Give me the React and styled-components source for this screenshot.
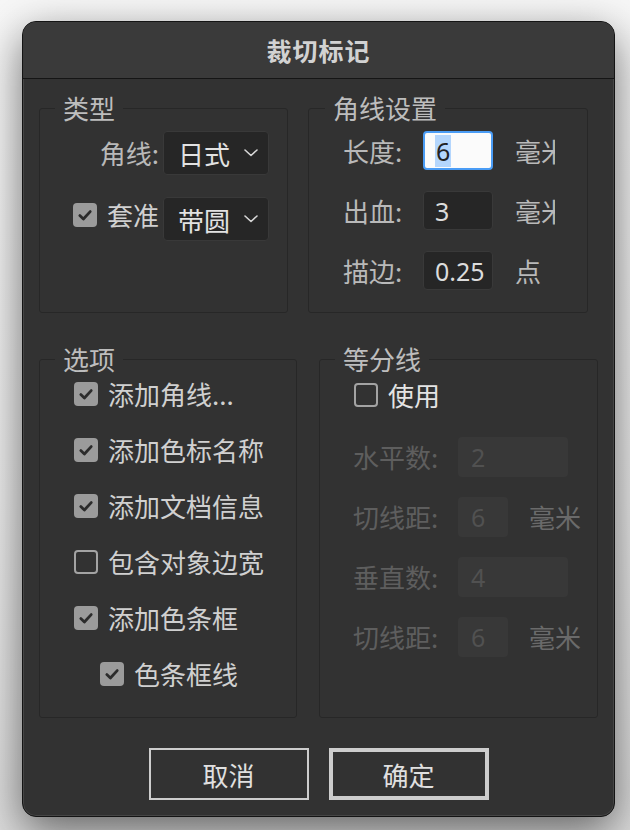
import React from "react";
import styled, { createGlobalStyle, css } from "styled-components";

const GlobalStyle = createGlobalStyle`
  html, body { margin: 0; padding: 0; }
  body {
    width: 630px;
    height: 830px;
    overflow: hidden;
    background: linear-gradient(180deg, #f7f7f7 0%, #ececec 60%, #dcdcdc 100%);
    font-family: "Noto Sans CJK SC", "Noto Sans", sans-serif;
  }
  #root { padding-top: 21px; }
`;

const Window = styled.div`
  box-sizing: border-box;
  margin-left: 22px;
  width: 593px;
  height: 796px;
  border: 1px solid #141414;
  border-radius: 14px;
  background: #323232;
  box-shadow: inset 0 0 0 1px rgba(255, 255, 255, 0.1),
    0 14px 44px rgba(0, 0, 0, 0.55);
  display: flex;
  flex-direction: column;
  overflow: hidden;
`;

const TitleBar = styled.div`
  box-sizing: border-box;
  height: 57px;
  flex: none;
  background: #3a3a3a;
  border-bottom: 1px solid #151515;
  display: flex;
  align-items: center;
  justify-content: center;
  color: #d2d2d2;
  font-size: 25px;
  font-weight: 700;
  letter-spacing: 1px;
`;

const Body = styled.div`
  flex: 1;
  display: flex;
  flex-direction: column;
  padding: 16px 16px 0 16px;
`;

const Row = styled.div`
  display: flex;
  gap: ${(p) => p.$gap}px;
  height: ${(p) => p.$h}px;
  margin-bottom: ${(p) => p.$mb}px;
`;

const Group = styled.fieldset`
  box-sizing: border-box;
  margin: 0;
  padding: 0;
  min-width: 0;
  width: ${(p) => p.$w}px;
  height: 100%;
  border: 1px solid #272727;
  border-radius: 3px;
`;

const Legend = styled.legend`
  margin-left: ${(p) => p.$ml || 15}px;
  padding: 0 8px;
  font-size: 26px;
  line-height: 26px;
  color: #bdbdbd;
`;

const TypeGrid = styled.div`
  display: grid;
  grid-template-columns: 119px 106px;
  column-gap: 4px;
  row-gap: 22px;
  padding-top: 10px;
`;

const FieldLabel = styled.div`
  font-size: 26px;
  line-height: 26px;
  color: ${(p) => (p.$disabled ? "#5e5e5e" : "#b9b9b9")};
  white-space: nowrap;
  display: flex;
  align-items: center;
  justify-content: ${(p) => (p.$right ? "flex-end" : "flex-start")};
  gap: 10px;
  ${(p) =>
    p.$raised &&
    css`
      align-self: start;
      margin-top: 6px;
      height: 24px;
    `}
`;

const LabelText = styled.span`
  color: ${(p) => p.$color || "inherit"};
`;

const Select = styled.div`
  box-sizing: border-box;
  height: 44px;
  background: #262626;
  border: 1px solid #393939;
  border-radius: 4px;
  display: flex;
  align-items: center;
  justify-content: space-between;
  padding: 0 10px 0 14px;
  color: #e2e2e2;
  font-size: 26px;
`;

const Chevron = () => (
  <svg width="14" height="8" viewBox="0 0 14 8">
    <polyline
      points="1,1 7,6.5 13,1"
      fill="none"
      stroke="#d6d6d6"
      strokeWidth="1.6"
      strokeLinecap="round"
      strokeLinejoin="round"
    />
  </svg>
);

const Box = styled.span`
  box-sizing: border-box;
  flex: none;
  width: 24px;
  height: 24px;
  border-radius: 4px;
  display: inline-flex;
  align-items: center;
  justify-content: center;
  ${(p) =>
    p.$checked
      ? css`
          background: #9b9b9b;
        `
      : css`
          border: 2px solid #a3a3a3;
        `}
`;

const Checkbox = ({ checked }) => (
  <Box $checked={checked}>
    {checked && (
      <svg width="16" height="16" viewBox="0 0 16 16">
        <polyline
          points="2.8,8.6 6.4,12 13.2,4.6"
          fill="none"
          stroke="#2c2c2c"
          strokeWidth="2.8"
          strokeLinecap="round"
          strokeLinejoin="round"
        />
      </svg>
    )}
  </Box>
);

const CornerGrid = styled.div`
  display: grid;
  grid-template-columns: 58px 70px 40px;
  column-gap: 22px;
  row-gap: 21px;
  padding: 10px 0 0 34px;
`;

const Input = styled.div`
  box-sizing: border-box;
  height: ${(p) => p.$h || 39}px;
  width: ${(p) => (p.$w ? `${p.$w}px` : "auto")};
  border-radius: 4px;
  display: flex;
  align-items: center;
  font-family: "Noto Sans", "Lato", sans-serif;
  font-size: 25px;
  ${(p) =>
    p.$focused
      ? css`
          background: #fbfbfb;
          border: 2px solid #4a9cf5;
          padding-left: 10px;
          color: #222;
        `
      : p.$disabled
      ? css`
          background: #383838;
          padding-left: 13px;
          color: #515151;
        `
      : css`
          background: #262626;
          border: 1px solid #393939;
          padding-left: 11px;
          color: #dcdcdc;
        `}
`;

const Selected = styled.span`
  background: #b4d6fd;
  line-height: 32px;
  padding: 0 1px;
`;

const Unit = styled.div`
  font-size: 26px;
  line-height: 26px;
  color: ${(p) => (p.$disabled ? "#6a6a6a" : "#b9b9b9")};
  white-space: nowrap;
  overflow: ${(p) => (p.$clip ? "hidden" : "visible")};
  display: flex;
  align-items: center;
`;

const OptionList = styled.div`
  display: flex;
  flex-direction: column;
  gap: 32px;
  padding: 10px 0 0 34px;
`;

const CheckRow = styled.label`
  display: flex;
  align-items: center;
  gap: 10px;
  height: 24px;
  margin-left: ${(p) => p.$indent || 0}px;
  font-size: 26px;
  line-height: 24px;
  color: ${(p) => p.$color || "#d0d0d0"};
  white-space: nowrap;
`;

const DivideBody = styled.div`
  display: flex;
  flex-direction: column;
  padding: 11px 0 0 34px;
`;

const DivideGrid = styled.div`
  display: grid;
  grid-template-columns: 84px 50px 48px;
  column-gap: 21px;
  row-gap: 20px;
  margin-top: 30px;
  margin-left: -1px;
`;

const WideInput = styled(Input)`
  grid-column: 2 / span 2;
`;

const ButtonRow = styled.div`
  display: flex;
  justify-content: center;
  gap: 20px;
`;

const Button = styled.button`
  box-sizing: border-box;
  width: 160px;
  height: 52px;
  background: transparent;
  border: ${(p) => (p.$primary ? 4 : 2)}px solid #cdcdcd;
  border-radius: 0;
  color: #e0e0e0;
  font-family: "Noto Sans CJK SC", sans-serif;
  font-size: 26px;
  padding: 0;
`;

export default function App() {
  return (
    <>
      <GlobalStyle />
      <Window>
        <TitleBar>裁切标记</TitleBar>
        <Body>
          <Row $gap={20} $h={218} $mb={33}>
            <Group $w={249}>
              <Legend>类型</Legend>
              <TypeGrid>
                <FieldLabel $right>角线:</FieldLabel>
                <Select>
                  <span>日式</span>
                  <Chevron />
                </Select>
                <FieldLabel $right $raised>
                  <Checkbox checked />
                  <LabelText $color="#d0d0d0">套准</LabelText>
                </FieldLabel>
                <Select>
                  <span>带圆</span>
                  <Chevron />
                </Select>
              </TypeGrid>
            </Group>
            <Group $w={280}>
              <Legend $ml={16}>角线设置</Legend>
              <CornerGrid>
                <FieldLabel>长度:</FieldLabel>
                <Input $focused>
                  <Selected>6</Selected>
                </Input>
                <Unit $clip>毫米</Unit>
                <FieldLabel>出血:</FieldLabel>
                <Input>3</Input>
                <Unit $clip>毫米</Unit>
                <FieldLabel>描边:</FieldLabel>
                <Input>0.25</Input>
                <Unit $clip>点</Unit>
              </CornerGrid>
            </Group>
          </Row>
          <Row $gap={22} $h={372} $mb={30}>
            <Group $w={258}>
              <Legend>选项</Legend>
              <OptionList>
                <CheckRow>
                  <Checkbox checked />
                  添加角线...
                </CheckRow>
                <CheckRow>
                  <Checkbox checked />
                  添加色标名称
                </CheckRow>
                <CheckRow>
                  <Checkbox checked />
                  添加文档信息
                </CheckRow>
                <CheckRow>
                  <Checkbox />
                  包含对象边宽
                </CheckRow>
                <CheckRow>
                  <Checkbox checked />
                  添加色条框
                </CheckRow>
                <CheckRow $indent={26}>
                  <Checkbox checked />
                  色条框线
                </CheckRow>
              </OptionList>
            </Group>
            <Group $w={279}>
              <Legend>等分线</Legend>
              <DivideBody>
                <CheckRow $color="#e4e4e4">
                  <Checkbox />
                  使用
                </CheckRow>
                <DivideGrid>
                  <FieldLabel $disabled>水平数:</FieldLabel>
                  <WideInput $disabled $h={40} $w={110}>
                    2
                  </WideInput>
                  <FieldLabel $disabled>切线距:</FieldLabel>
                  <Input $disabled $h={40}>
                    6
                  </Input>
                  <Unit $disabled>毫米</Unit>
                  <FieldLabel $disabled>垂直数:</FieldLabel>
                  <WideInput $disabled $h={40} $w={110}>
                    4
                  </WideInput>
                  <FieldLabel $disabled>切线距:</FieldLabel>
                  <Input $disabled $h={40}>
                    6
                  </Input>
                  <Unit $disabled>毫米</Unit>
                </DivideGrid>
              </DivideBody>
            </Group>
          </Row>
          <ButtonRow>
            <Button>取消</Button>
            <Button $primary>确定</Button>
          </ButtonRow>
        </Body>
      </Window>
    </>
  );
}
